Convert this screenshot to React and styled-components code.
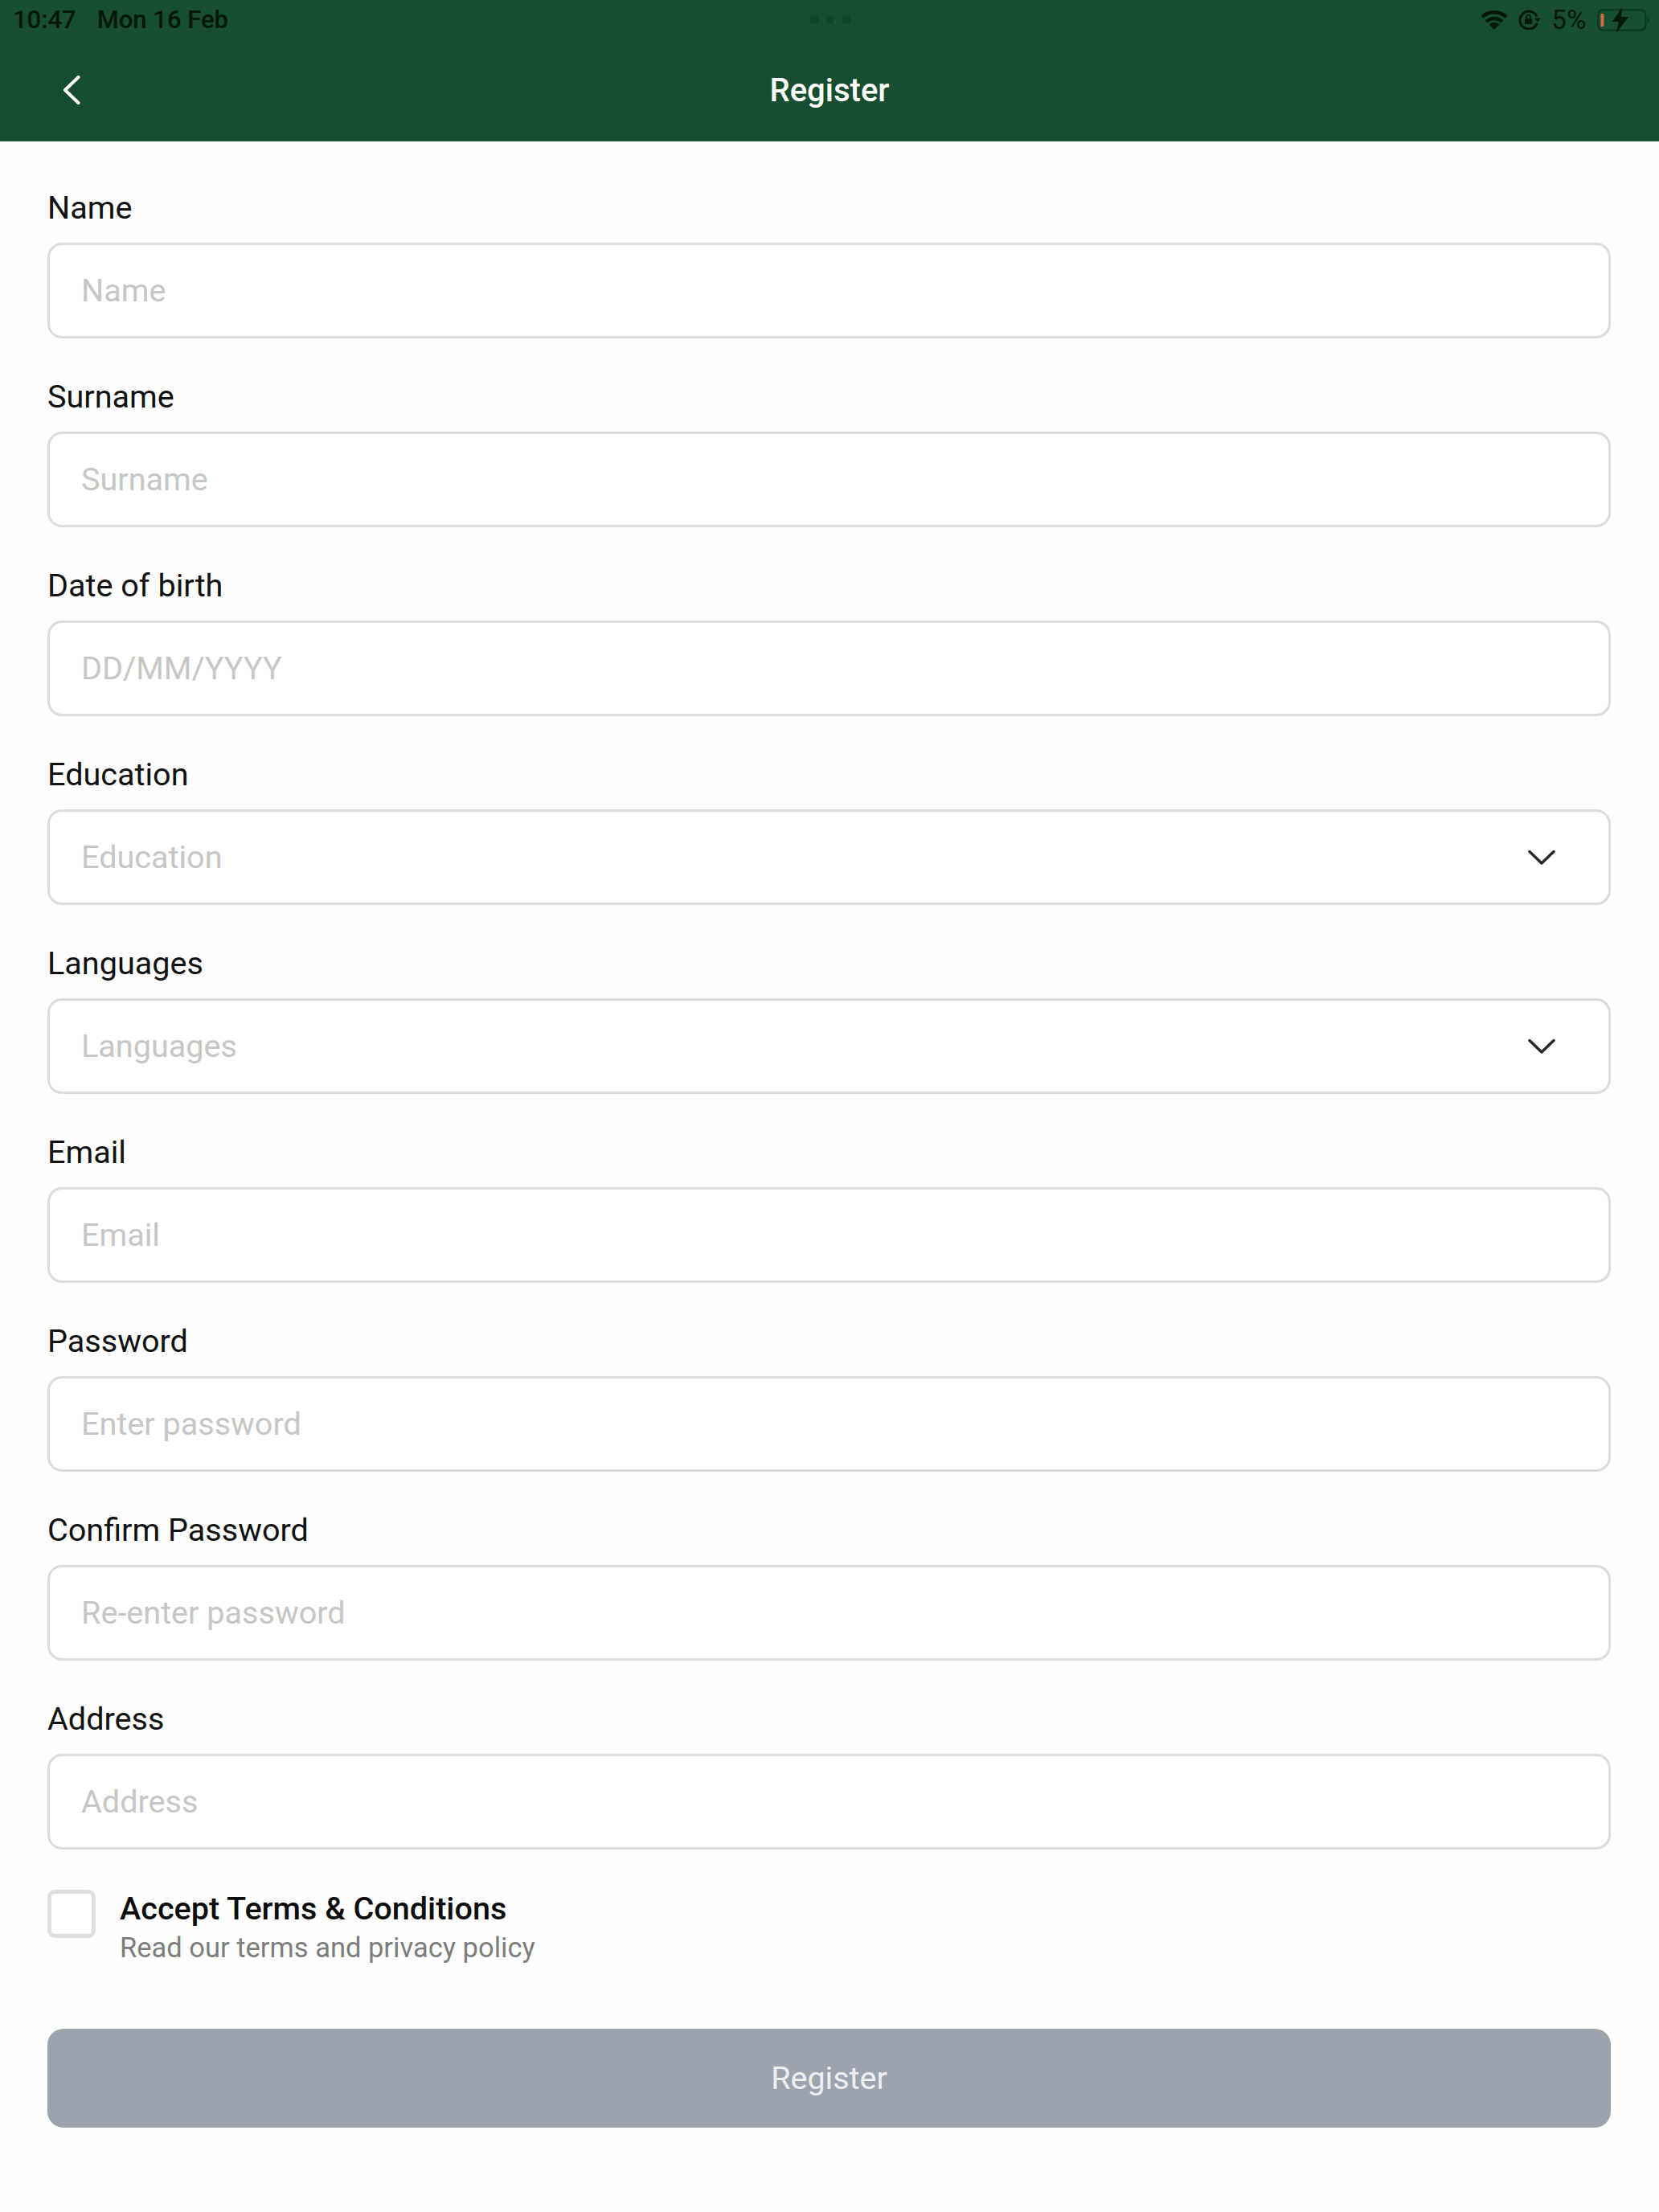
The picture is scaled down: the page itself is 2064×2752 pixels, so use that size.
import React from 'react';
import styled, { createGlobalStyle } from 'styled-components';

const GlobalStyle = createGlobalStyle`
  html, body {
    margin: 0;
    padding: 0;
    background: #fefefe;
  }
  * {
    box-sizing: border-box;
  }
  body {
    font-family: Roboto, "Liberation Sans", sans-serif;
  }
`;

const Page = styled.div`
  width: 2064px;
  height: 2752px;
  background: #fefefe;
  overflow: hidden;
`;

const Header = styled.header`
  height: 176px;
  background: #174e2f;
  border-bottom: 1px solid #2e6044;
`;

const StatusBar = styled.div`
  height: 49px;
  padding: 0 11px;
  display: grid;
  grid-template-columns: 1fr auto 1fr;
  align-items: center;
  color: #03170a;
  font-size: 31px;
  font-weight: 500;
  line-height: 49px;
`;

const StatusLeft = styled.div`
  margin-left: 5px;
  display: flex;
  gap: 26px;
`;

const Dots = styled.div`
  display: flex;
  gap: 9px;
`;

const Dot = styled.span`
  width: 11px;
  height: 11px;
  border-radius: 50%;
  background: #0f4526;
`;

const StatusRight = styled.div`
  display: flex;
  justify-content: flex-end;
  align-items: center;
  gap: 13px;
`;

const Percent = styled.span`
  font-size: 33px;
  font-weight: 400;
  letter-spacing: 0.5px;
`;

const NavBar = styled.div`
  height: 126px;
  padding: 0 28px 0 78px;
  display: grid;
  grid-template-columns: 1fr auto 1fr;
  align-items: center;
`;

const NavTitle = styled.h1`
  margin: 0;
  color: #fff;
  font-size: 40px;
  font-weight: 500;
  transform: translateX(-25px);
`;

const Form = styled.form`
  padding: 55px 60px 0 59px;
  display: flex;
  flex-direction: column;
  gap: 45px;
`;

const Field = styled.div`
  display: flex;
  flex-direction: column;
  gap: 15px;
`;

const Label = styled.label`
  color: #111;
  font-size: 39.6px;
  line-height: 56px;
`;

const InputBox = styled.div`
  height: 119px;
  padding: 0 40px 0 39px;
  display: flex;
  align-items: center;
  border: 3px solid #dcdcdc;
  border-radius: 18px;
  background: #fff;
`;

const Input = styled.input`
  flex: 1;
  min-width: 0;
  padding: 0;
  border: 0;
  outline: 0;
  background: transparent;
  font-family: inherit;
  font-size: 39.6px;
  color: #111;
  &::placeholder {
    color: #c6c6c6;
    opacity: 1;
  }
`;

const Chevron = styled.svg`
  flex: none;
  margin-right: 26px;
`;

const Terms = styled.div`
  margin-top: 5px;
  display: flex;
  gap: 30px;
`;

const CheckBox = styled.span`
  flex: none;
  width: 60px;
  height: 60px;
  border: 5px solid #dedede;
  border-radius: 9px;
  background: #fff;
`;

const TermsText = styled.div`
  padding-top: 1px;
  display: flex;
  flex-direction: column;
`;

const TermsTitle = styled.div`
  color: #0c0c0c;
  font-size: 39.6px;
  font-weight: 500;
  line-height: 46px;
`;

const TermsSub = styled.div`
  color: #7d7d7d;
  font-size: 34.5px;
  line-height: 50px;
`;

const SubmitButton = styled.button`
  margin-top: 31px;
  height: 123px;
  border: 0;
  border-radius: 20px;
  background: #9ca3af;
  color: #eceef1;
  font-family: inherit;
  font-size: 39.5px;
`;

const WifiIcon = () => (
  <svg width="34" height="24" viewBox="0 0 34 24">
    <path d="M17 24l-6.500-6.600a9.200 9.200 0 0 1 13 0z" fill="#03170a" />
    <path d="M7 14a14.400 14.400 0 0 1 20 0M2 8.200a21.600 21.600 0 0 1 30 0" fill="none" stroke="#03170a" strokeWidth="4.500" />
  </svg>
);

const RotationLockIcon = () => (
  <svg width="28" height="25" viewBox="0 0 28 25">
    <path d="M23 8.500A11 11 0 1 0 23.500 16.500" fill="none" stroke="#03170a" strokeWidth="3" />
    <path d="M20 10.500h8l-4 5z" fill="#03170a" />
    <rect x="8" y="11" width="9" height="7" rx="1" fill="#03170a" />
    <path d="M10 11V9a2.500 2.500 0 0 1 5 0v2" fill="none" stroke="#03170a" strokeWidth="1.600" />
  </svg>
);

const BatteryIcon = () => (
  <svg width="66" height="32" viewBox="0 0 66 32">
    <rect x="1.250" y="3.250" width="59" height="25.500" rx="6" fill="none" stroke="#0c3a1e" strokeWidth="2.500" />
    <path d="M63 12.500c1.500 1 2.500 2.200 2.500 3.500s-1 2.500-2.500 3.500z" fill="#0c3a1e" />
    <rect x="4.500" y="8" width="4" height="16" rx="1" fill="#d2694a" />
    <path d="M31 0L19 18h8L24 32 39 12h-9z" fill="#03170a" />
  </svg>
);

const BackIcon = () => (
  <svg width="22" height="36" viewBox="0 0 22 36">
    <path d="M19.500 2L3 18l16.500 16" fill="none" stroke="#fff" strokeWidth="4" strokeLinecap="round" strokeLinejoin="round" />
  </svg>
);

const ChevronIcon = () => (
  <Chevron width="34" height="20" viewBox="0 0 34 20">
    <path d="M2 2.500L17 17 32 2.500" fill="none" stroke="#2a2a2a" strokeWidth="3.500" strokeLinecap="round" strokeLinejoin="round" />
  </Chevron>
);

const fields = [
  { label: 'Name', placeholder: 'Name' },
  { label: 'Surname', placeholder: 'Surname' },
  { label: 'Date of birth', placeholder: 'DD/MM/YYYY' },
  { label: 'Education', placeholder: 'Education', select: true },
  { label: 'Languages', placeholder: 'Languages', select: true },
  { label: 'Email', placeholder: 'Email' },
  { label: 'Password', placeholder: 'Enter password' },
  { label: 'Confirm Password', placeholder: 'Re-enter password' },
  { label: 'Address', placeholder: 'Address' },
];

const App = () => {
  return (
    <Page>
      <GlobalStyle />
      <Header>
        <StatusBar>
          <StatusLeft>
            <span>10:47</span>
            <span>Mon 16 Feb</span>
          </StatusLeft>
          <Dots>
            <Dot />
            <Dot />
            <Dot />
          </Dots>
          <StatusRight>
            <WifiIcon />
            <RotationLockIcon />
            <Percent>5%</Percent>
            <BatteryIcon />
          </StatusRight>
        </StatusBar>
        <NavBar>
          <BackIcon />
          <NavTitle>Register</NavTitle>
        </NavBar>
      </Header>
      <Form>
        {fields.map((f) => (
          <Field key={f.label}>
            <Label>{f.label}</Label>
            <InputBox>
              <Input placeholder={f.placeholder} readOnly={f.select} />
              {f.select && <ChevronIcon />}
            </InputBox>
          </Field>
        ))}
        <Terms>
          <CheckBox />
          <TermsText>
            <TermsTitle>Accept Terms &amp; Conditions</TermsTitle>
            <TermsSub>Read our terms and privacy policy</TermsSub>
          </TermsText>
        </Terms>
        <SubmitButton type="button">Register</SubmitButton>
      </Form>
    </Page>
  );
};

export default App;
